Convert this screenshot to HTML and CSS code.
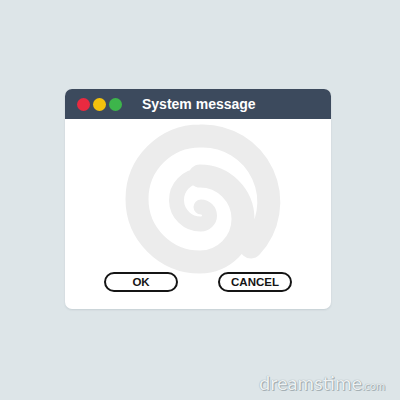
FILE: index.html
```html
<!DOCTYPE html>
<html>
<head>
<meta charset="utf-8">
<link rel="stylesheet" href="styles.css">
</head>
<body>
<div class="window">
  <div class="titlebar">
    <div class="dots">
      <span class="dot red"></span>
      <span class="dot yellow"></span>
      <span class="dot green"></span>
    </div>
    <div class="title">System message</div>
  </div>
  <div class="content">
    <svg class="spiral" viewBox="65 119 266 190" width="266" height="190">
      <path class="arm inner" d="M201 207 A8.5 8.5 0 0 1 201 224 A24 24 0 0 1 200 176"/>
      <path class="arm outer" d="M200 176 A43 43 0 0 1 200 262 A63 63 0 0 1 200 136 A66 66 0 0 1 251 247"/>
    </svg>
    <div class="buttons">
      <button class="btn">OK</button>
      <button class="btn">CANCEL</button>
    </div>
  </div>
</div>
<div class="watermark">dreamstime<span class="com">.com</span></div>
</body>
</html>
```
FILE: styles.css
```css
html, body {
  margin: 0;
  padding: 0;
}
body {
  width: 400px;
  height: 400px;
  background: #dde5e8;
  position: relative;
  overflow: hidden;
  font-family: "Liberation Sans", Arial, sans-serif;
}
.window {
  position: relative;
  margin: 89px 0 0 65px;
  width: 266px;
  height: 220px;
  display: flex;
  flex-direction: column;
  border-radius: 7px;
  background: #ffffff;
  box-shadow: 0 1px 2px rgba(60, 80, 90, 0.14);
  overflow: hidden;
}
.titlebar {
  height: 30px;
  background: #3c4a5d;
  display: flex;
  align-items: center;
  padding-left: 12px;
  gap: 20px;
}
.dots {
  display: flex;
  gap: 3px;
}
.dot {
  width: 13px;
  height: 13px;
  border-radius: 50%;
  display: block;
}
.red { background: #ea2a40; }
.yellow { background: #f4c20d; }
.green { background: #3db54b; }
.title {
  color: #ffffff;
  font-weight: bold;
  font-size: 14px;
  line-height: 16px;
}
.content {
  position: relative;
  flex: 1;
  display: flex;
  flex-direction: column;
  justify-content: flex-end;
  padding-bottom: 17px;
}
.spiral {
  position: absolute;
  left: 0;
  top: 0;
}
.arm {
  fill: none;
  stroke: #ececec;
  stroke-linecap: round;
}
.inner { stroke-width: 15; }
.outer { stroke-width: 23; }
.buttons {
  position: relative;
  display: flex;
  justify-content: center;
  gap: 40px;
}
.btn {
  width: 74px;
  height: 20px;
  box-sizing: border-box;
  border: 2px solid #151515;
  border-radius: 10px;
  background: #ffffff;
  font-family: "Liberation Sans", Arial, sans-serif;
  font-weight: bold;
  font-size: 11.5px;
  color: #151515;
  padding: 0;
  line-height: 16px;
}
.watermark {
  position: absolute;
  right: 15px;
  bottom: 6px;
  font-family: Lato, "DejaVu Sans", sans-serif;
  font-weight: 400;
  font-size: 20px;
  color: #eef2f3;
  text-shadow: 0 0 1px #7f8a90, 1px 1px 0 #aab4b9;
}
.com {
  font-size: 11px;
}
```
